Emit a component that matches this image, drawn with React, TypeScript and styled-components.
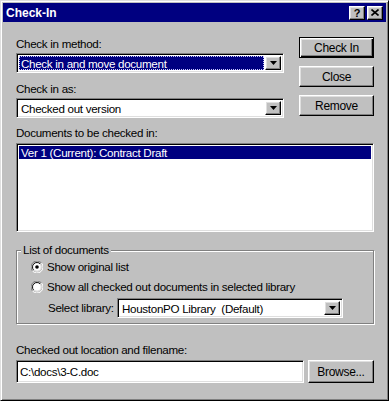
import React from "react";
import styled, { createGlobalStyle } from "styled-components";

const Global = createGlobalStyle`
  html, body { margin: 0; padding: 0; background: #c0c0c0; }
  body { font-family: "Liberation Sans", Arial, sans-serif; font-size: 11.6px; letter-spacing: -0.3px; color: #000; }
  * { box-sizing: border-box; }
`;

const Window = styled.div`
  width: 389px;
  height: 401px;
  background: #c0c0c0;
  border-top: 1px solid #dfdfdf;
  border-left: 1px solid #dfdfdf;
  border-right: 1px solid #000;
  border-bottom: 1px solid #000;
  box-shadow: inset 1px 1px 0 #fff, inset -1px -1px 0 #808080;
  padding: 2px;
  display: flex;
  flex-direction: column;
`;

const TitleBar = styled.div`
  height: 19px;
  background: #000080;
  display: flex;
  align-items: center;
  padding: 0 3px 0 3px;
`;

const TitleText = styled.div`
  flex: 1;
  color: #fff;
  font-weight: bold;
  font-size: 12px;
  letter-spacing: 0;
  line-height: 14px;
`;

const TitleButtons = styled.div`
  display: flex;
  gap: 2px;
`;

const raised = `
  background: #c0c0c0;
  border-top: 1px solid #fff;
  border-left: 1px solid #fff;
  border-right: 1px solid #000;
  border-bottom: 1px solid #000;
  box-shadow: inset -1px -1px 0 #808080, inset 1px 1px 0 #dfdfdf;
`;

const sunken = `
  border-top: 1px solid #808080;
  border-left: 1px solid #808080;
  border-right: 1px solid #fff;
  border-bottom: 1px solid #fff;
  box-shadow: inset 1px 1px 0 #000, inset -1px -1px 0 #dfdfdf;
`;

const TitleButton = styled.div`
  ${raised}
  width: 16px;
  height: 14px;
  display: flex;
  align-items: center;
  justify-content: center;
  font-weight: bold;
  font-size: 11px;
  letter-spacing: 0;
  line-height: 12px;
`;

const Body = styled.div`
  flex: 1;
  padding: 15px 12px 0 13px;
  display: flex;
  flex-direction: column;
`;

const TopSection = styled.div`
  display: grid;
  grid-template-columns: 268px 75px;
  column-gap: 15px;
`;

const Column = styled.div`
  display: flex;
  flex-direction: column;
`;

const Label = styled.div<{ $mt?: number }>`
  line-height: 14px;
  height: 14px;
  white-space: nowrap;
  margin-top: ${(p) => p.$mt ?? 0}px;
`;

const Combo = styled.div<{ $mt?: number; $w?: number }>`
  ${sunken}
  background: #fff;
  height: 20px;
  ${(p) => (p.$w ? `width: ${p.$w}px;` : "")}
  margin-top: ${(p) => p.$mt ?? 0}px;
  display: flex;
  padding: 2px;
`;

const ComboValue = styled.div<{ $selected?: boolean }>`
  flex: 1;
  line-height: 14px;
  padding: 1px 1px 1px 2px;
  margin-right: 1px;
  white-space: nowrap;
  overflow: hidden;
  background: ${(p) => (p.$selected ? "#000080" : "transparent")};
  color: ${(p) => (p.$selected ? "#fff" : "#000")};
  outline: ${(p) => (p.$selected ? "1px dotted #c8c8ff" : "none")};
  outline-offset: -1px;
`;

const DropButton = styled.div`
  ${raised}
  width: 16px;
  display: flex;
  align-items: center;
  justify-content: center;
`;

const Arrow = () => (
  <svg width="7" height="4" viewBox="0 0 7 4">
    <path d="M0 0h7L3.5 4z" fill="#000" />
  </svg>
);

const Button = styled.div<{ $default?: boolean; $w?: number; $h?: number }>`
  ${raised}
  height: ${(p) => p.$h ?? 21}px;
  ${(p) => (p.$w ? `width: ${p.$w}px;` : "")}
  display: flex;
  align-items: center;
  justify-content: center;
  font-size: 12px;
  ${(p) =>
    p.$default
      ? `border: 1px solid #000;
         box-shadow: inset 1px 1px 0 #fff, inset -1px -1px 0 #000, inset -2px -2px 0 #808080, inset 2px 2px 0 #dfdfdf;`
      : ""}
`;

const ButtonColumn = styled.div`
  display: flex;
  flex-direction: column;
  gap: 8px;
`;

const ListBox = styled.div`
  ${sunken}
  background: #fff;
  height: 89px;
  margin-top: 3px;
  padding: 2px;
`;

const ListItem = styled.div<{ $selected?: boolean }>`
  line-height: 13px;
  height: 13px;
  padding-left: 2px;
  background: ${(p) => (p.$selected ? "#000080" : "transparent")};
  color: ${(p) => (p.$selected ? "#fff" : "#000")};
  white-space: nowrap;
`;

const Group = styled.div`
  position: relative;
  margin-top: 18px;
  height: 74px;
  border: 1px solid #808080;
  box-shadow: 1px 1px 0 #fff, inset 1px 1px 0 #fff;
  padding: 9px 0 0 14px;
  display: flex;
  flex-direction: column;
`;

const Legend = styled.div`
  position: absolute;
  top: -8px;
  left: 4px;
  padding: 0 2px;
  background: #c0c0c0;
  line-height: 14px;
`;

const RadioRow = styled.label<{ $mt?: number }>`
  display: flex;
  align-items: center;
  height: 14px;
  line-height: 14px;
  gap: 4px;
  margin-top: ${(p) => p.$mt ?? 0}px;
  white-space: nowrap;
`;

const Radio = ({ checked }: { checked?: boolean }) => (
  <svg width="12" height="12" viewBox="0 0 12 12" style={{ flex: "none" }}>
    <path d="M10.5 2 A5.5 5.5 0 0 0 1.5 10" stroke="#808080" fill="none" strokeWidth="1" />
    <path d="M9.3 3 A4.3 4.3 0 0 0 2.7 9" stroke="#000" fill="none" strokeWidth="1" />
    <path d="M1.5 10 A5.5 5.5 0 0 0 10.5 2" stroke="#fff" fill="none" strokeWidth="1" />
    <path d="M2.7 9 A4.3 4.3 0 0 0 9.3 3" stroke="#dfdfdf" fill="none" strokeWidth="1" />
    <circle cx="6" cy="6" r="3.8" fill="#fff" />
    {checked && <circle cx="6" cy="6" r="1.8" fill="#000" />}
  </svg>
);

const SelectRow = styled.div`
  display: flex;
  align-items: center;
  margin-top: 4px;
  margin-left: 17px;
`;

const SelectLabel = styled.span`
  line-height: 14px;
  width: 69px;
  white-space: nowrap;
`;

const BottomRow = styled.div`
  display: flex;
  gap: 4px;
  margin-top: 3px;
`;

const TextBox = styled.div`
  ${sunken}
  background: #fff;
  flex: 1;
  height: 23px;
  padding: 4px 3px;
  line-height: 14px;
`;

export default function App() {
  return (
    <>
      <Global />
      <Window>
        <TitleBar>
          <TitleText>Check-In</TitleText>
          <TitleButtons>
            <TitleButton>?</TitleButton>
            <TitleButton>
              <svg width="8" height="7" viewBox="0 0 8 7">
                <path d="M0.5 0.5L7.5 6.5M7.5 0.5L0.5 6.5" stroke="#000" strokeWidth="1.6" />
              </svg>
            </TitleButton>
          </TitleButtons>
        </TitleBar>
        <Body>
          <TopSection>
            <Column>
              <Label>Check in method:</Label>
              <Combo $mt={2}>
                <ComboValue $selected>Check in and move document</ComboValue>
                <DropButton>
                  <Arrow />
                </DropButton>
              </Combo>
              <Label $mt={9}>Check in as:</Label>
              <Combo $mt={2}>
                <ComboValue>Checked out version</ComboValue>
                <DropButton>
                  <Arrow />
                </DropButton>
              </Combo>
            </Column>
            <ButtonColumn>
              <Button $default>Check In</Button>
              <Button>Close</Button>
              <Button>Remove</Button>
            </ButtonColumn>
          </TopSection>
          <Label $mt={8}>Documents to be checked in:</Label>
          <ListBox>
            <ListItem $selected>Ver 1 (Current): Contract Draft</ListItem>
          </ListBox>
          <Group>
            <Legend>List of documents</Legend>
            <RadioRow>
              <Radio checked />
              <span>Show original list</span>
            </RadioRow>
            <RadioRow $mt={6}>
              <Radio />
              <span>Show all checked out documents in selected library</span>
            </RadioRow>
            <SelectRow>
              <SelectLabel>Select library:</SelectLabel>
              <Combo $w={226}>
                <ComboValue>HoustonPO Library&nbsp; (Default)</ComboValue>
                <DropButton>
                  <Arrow />
                </DropButton>
              </Combo>
            </SelectRow>
          </Group>
          <Label $mt={19}>Checked out location and filename:</Label>
          <BottomRow>
            <TextBox>C:\docs\3-C.doc</TextBox>
            <Button $w={66} $h={23}>Browse...</Button>
          </BottomRow>
        </Body>
      </Window>
    </>
  );
}
